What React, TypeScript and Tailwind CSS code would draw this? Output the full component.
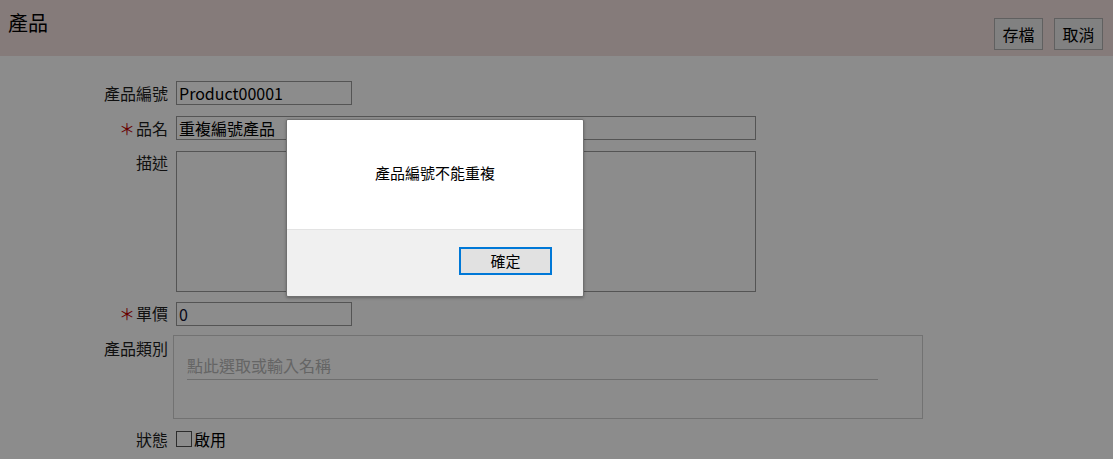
const font = { fontFamily: '"Noto Sans CJK TC", "Noto Sans", sans-serif' };

function Row({ label, required, children, top = 0 }: { label: string; required?: boolean; children: React.ReactNode; top?: number }) {
  return (
    <div className="flex items-start">
      <div className="w-[168px] shrink-0 text-right text-[16px] leading-[20px] text-[#1e1e1e]" style={{ paddingTop: top }}>
        {required && <span className="mr-[1px] text-[#c00000]">＊</span>}
        {label}
      </div>
      {children}
    </div>
  );
}

export default function App() {
  return (
    <div className="relative h-[459px] w-[1113px] overflow-hidden bg-white" style={font}>
      <div className="flex h-[56px] items-start justify-between bg-[#f3e1df]">
        <div className="pl-[8px] pt-[10px] text-[20px] leading-[26px] text-black">產品</div>
        <div className="flex gap-[11px] pr-[10px] pt-[18px]">
          <button className="h-[32px] w-[49px] border border-[#b0b0b0] bg-[#ececec] text-[16px] text-black">存檔</button>
          <button className="h-[32px] w-[49px] border border-[#b0b0b0] bg-[#ececec] text-[16px] text-black">取消</button>
        </div>
      </div>

      <div className="flex flex-col pt-[25px]">
        <Row label="產品編號" top={2}>
          <div className="ml-[8px] h-[24px] w-[176px] border border-[#9a9a9a] pl-[2px] text-[16px] leading-[22px] text-black">Product00001</div>
        </Row>
        <div className="mt-[11px]">
          <Row label="品名" required top={2}>
            <div className="ml-[8px] h-[24px] w-[580px] border border-[#9a9a9a] pl-[2px] text-[16px] leading-[22px] text-black">重複編號產品</div>
          </Row>
        </div>
        <div className="mt-[11px]">
          <Row label="描述" top={1}>
            <div className="ml-[8px] h-[141px] w-[580px] border border-[#9a9a9a]" />
          </Row>
        </div>
        <div className="mt-[10px]">
          <Row label="單價" required top={1}>
            <div className="ml-[8px] h-[24px] w-[176px] border border-[#9a9a9a] pl-[2px] text-[16px] leading-[22px] text-[#101030]">0</div>
          </Row>
        </div>
        <div className="mt-[9px]">
          <Row label="產品類別" top={3}>
            <div className="ml-[5px] h-[84px] w-[750px] border border-[#cfcfcf] px-[13px] pt-[19px]">
              <div className="w-[691px] border-b border-[#c8c8c8] pb-[4px] text-[16px] leading-[20px] text-[#b8b8b8]">點此選取或輸入名稱</div>
            </div>
          </Row>
        </div>
        <div className="mt-[10px]">
          <Row label="狀態">
            <div className="ml-[8px] flex items-center text-[16px] leading-[20px] text-black">
              <span className="h-[16px] w-[16px] border border-[#505050] bg-white" />
              <span className="ml-[2px]">啟用</span>
            </div>
          </Row>
        </div>
      </div>

      <div className="absolute inset-0 bg-black/[0.45]" />

      <div className="absolute left-[286px] top-[119px] flex h-[178px] w-[298px] flex-col overflow-hidden rounded-[2px] border border-[#707070] shadow-[0_1px_3px_rgba(0,0,0,0.3)]">
        <div className="flex h-[109px] items-center justify-center bg-white pb-[2px] text-[15px] text-black">產品編號不能重複</div>
        <div className="flex flex-1 items-start justify-end border-t border-[#e3e3e3] bg-[#f0f0f0] pr-[31px] pt-[17px]">
          <button className="h-[28px] w-[93px] border-2 border-[#0078d7] bg-[#e1e1e1] text-[15px] text-black">確定</button>
        </div>
      </div>
    </div>
  );
}
